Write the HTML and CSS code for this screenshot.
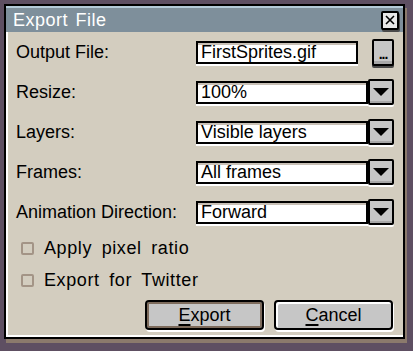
FILE: index.html
```html
<!DOCTYPE html>
<html lang="en">
<head>
    <meta charset="UTF-8">
    <title>Export File</title>
    <link rel="stylesheet" href="styles.css">
</head>
<body>
    <div class="window">
        <div class="titlebar">
            <span class="title">Export File</span>
            <span class="close-btn">
                <svg viewBox="0 0 10 10" width="10" height="10">
                    <path d="M1 1 L9 9 M9 1 L1 9" stroke="#000" stroke-width="1.6" />
                </svg>
            </span>
        </div>
        <div class="content">
            <div class="form">
                <div class="label">Output File:</div>
                <div class="field-row">
                    <div class="entry">FirstSprites.gif</div>
                    <div class="browse-btn">...</div>
                </div>

                <div class="label">Resize:</div>
                <div class="field-row">
                    <div class="combo">100%</div>
                    <div class="combo-btn"><span class="arrow"></span></div>
                </div>

                <div class="label">Layers:</div>
                <div class="field-row">
                    <div class="combo">Visible layers</div>
                    <div class="combo-btn"><span class="arrow"></span></div>
                </div>

                <div class="label">Frames:</div>
                <div class="field-row">
                    <div class="combo">All frames</div>
                    <div class="combo-btn"><span class="arrow"></span></div>
                </div>

                <div class="label">Animation Direction:</div>
                <div class="field-row">
                    <div class="combo">Forward</div>
                    <div class="combo-btn"><span class="arrow"></span></div>
                </div>
            </div>

            <div class="checks">
                <label class="check"><span class="box"></span>Apply pixel ratio</label>
                <label class="check"><span class="box"></span>Export for Twitter</label>
            </div>

            <div class="buttons">
                <div class="btn focused"><u>E</u>xport</div>
                <div class="btn"><u>C</u>ancel</div>
            </div>
        </div>
    </div>
</body>
</html>
```

FILE: styles.css
```css
body {
    margin: 0;
    padding: 4px;
    background: #5e4f62;
    font-family: 'Liberation Sans', Arial, sans-serif;
    font-size: 18px;
    color: #000;
}
.window {
    width: 397px;
    border: 2px solid #000;
    background: #d3cdbf;
    box-shadow: 2px 4px 0 #8b7a6c;
}
.titlebar {
    height: 24px;
    border-top: 2px solid #b4cad8;
    background: #7e8f9b;
    display: flex;
    align-items: center;
    justify-content: space-between;
    padding: 0 4px 0 7px;
}
.title {
    color: #fff;
    letter-spacing: 0.5px;
    word-spacing: 2px;
}
.close-btn {
    width: 14px;
    height: 15px;
    border: 2px solid #000;
    border-radius: 2px;
    background: #e8e8e8;
    display: flex;
    align-items: center;
    justify-content: center;
    box-shadow: 1px 2px 0 #4a4a4a;
}
.content {
    border-left: 2px solid #fff;
    border-bottom: 2px solid #fff;
    padding: 6px 9px 5px 8px;
}
.form {
    display: grid;
    grid-template-columns: 180px 1fr;
    row-gap: 12px;
    align-items: center;
}
.label {
    height: 28px;
    line-height: 28px;
}
.field-row {
    display: flex;
    align-items: center;
    height: 28px;
}
.entry, .combo {
    flex: 1;
    height: 19px;
    line-height: 19px;
    border: 2px solid #000;
    background: #fff;
    padding: 0 3px;
    box-shadow: inset 0 2px 0 #c8c0b6, 0 2px 0 #fff;
    white-space: nowrap;
    overflow: hidden;
}
.browse-btn {
    margin-left: 14px;
    width: 18px;
    height: 23px;
    border: 2px solid #000;
    border-radius: 2px;
    background: #c6c6c6;
    box-shadow: inset 0 -3px 0 #a8a8a8, 0 2px 0 #4a4a4a;
    font-size: 14px;
    font-weight: bold;
    text-align: center;
    line-height: 26px;
    letter-spacing: -1px;
}
.combo-btn {
    width: 22px;
    height: 22px;
    border: 2px solid #000;
    border-radius: 2px;
    background: #c6c6c6;
    box-shadow: inset 0 -2px 0 #a8a8a8, 0 2px 0 #fff;
    display: flex;
    align-items: center;
    justify-content: center;
}
.arrow {
    width: 0;
    height: 0;
    border-left: 8px solid transparent;
    border-right: 8px solid transparent;
    border-top: 8px solid #000;
}
.checks {
    display: flex;
    flex-direction: column;
    gap: 12px;
    margin-top: 12px;
}
.check {
    display: flex;
    align-items: center;
    gap: 10px;
    height: 20px;
    padding-left: 5px;
    letter-spacing: 0.6px;
    word-spacing: 4px;
}
.box {
    width: 9px;
    height: 9px;
    border: 2px solid #a39486;
    border-radius: 2px;
}
.buttons {
    display: flex;
    justify-content: flex-end;
    gap: 10px;
    margin-top: 10px;
    padding-right: 1px;
}
.btn {
    width: 115px;
    height: 26px;
    line-height: 26px;
    text-align: center;
    border: 2px solid #000;
    border-radius: 4px;
    background: #c6c6c6;
    box-shadow: inset 2px 2px 0 #fff, 1px 2px 0 #fff;
}
.btn.focused {
    box-shadow: inset 0 0 0 2px #7d6b5c, 1px 2px 0 #fff;
}
.btn u {
    text-decoration-thickness: 2px;
    text-underline-offset: 3px;
}
```
